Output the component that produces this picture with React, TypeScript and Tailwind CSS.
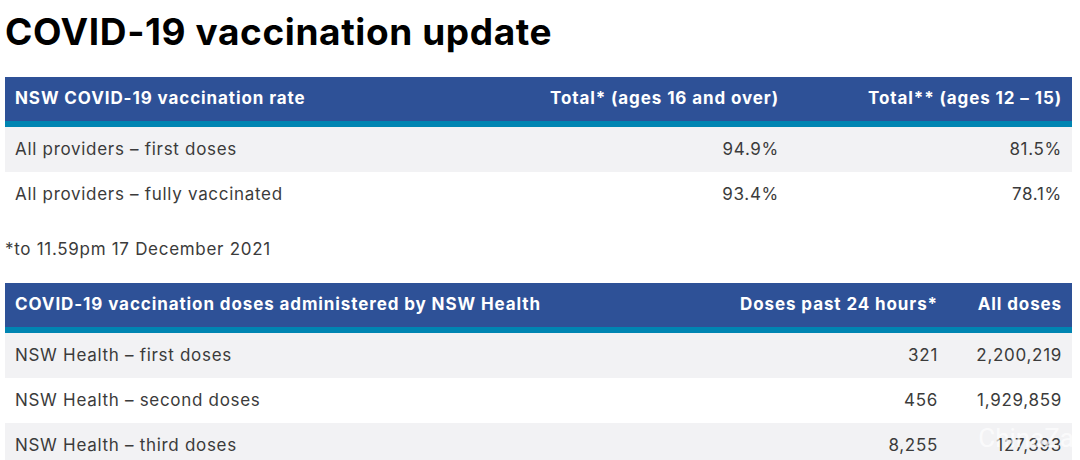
const rateRows = [
  { label: "All providers – first doses", older: "94.9%", teens: "81.5%" },
  { label: "All providers – fully vaccinated", older: "93.4%", teens: "78.1%" },
];

const doseRows = [
  { label: "NSW Health – first doses", day: "321", all: "2,200,219" },
  { label: "NSW Health – second doses", day: "456", all: "1,929,859" },
  { label: "NSW Health – third doses", day: "8,255", all: "127,393" },
];

function HeaderRow({ cols, cells }: { cols: string; cells: string[] }) {
  return (
    <div className="border-b-[6px] border-[#0085b2] bg-[#2e5197]">
      <div className={`grid ${cols} h-[44px] items-center px-[10px] text-[17px] font-bold tracking-[0.9px] text-white`}>
        {cells.map((c, i) => (
          <div key={i} className={i === 0 ? "text-left" : "text-right"}>
            {c}
          </div>
        ))}
      </div>
    </div>
  );
}

function BodyRow({ cols, cells, shaded }: { cols: string; cells: string[]; shaded: boolean }) {
  return (
    <div className={`grid ${cols} h-[45px] items-center px-[10px] text-[17px] tracking-[0.7px] text-[#3b3b3b] ${shaded ? "bg-[#f2f2f4]" : "bg-white"}`}>
      {cells.map((c, i) => (
        <div key={i} className={i === 0 ? "text-left" : "text-right"}>
          {c}
        </div>
      ))}
    </div>
  );
}

export default function App() {
  const rateCols = "grid-cols-[1fr_300px_283px]";
  const doseCols = "grid-cols-[1fr_250px_124px]";

  return (
    <main className="relative h-[460px] w-[1080px] overflow-hidden bg-white pl-[5px] pr-[8px] font-['Inter','Liberation_Sans',sans-serif]">
      <h1 className="pt-[9px] text-[37px] leading-[46px] font-bold tracking-[0.6px] text-black">COVID-19 vaccination update</h1>

      <section className="mt-[22px]">
        <HeaderRow cols={rateCols} cells={["NSW COVID-19 vaccination rate", "Total* (ages 16 and over)", "Total** (ages 12 – 15)"]} />
        {rateRows.map((r, i) => (
          <BodyRow key={r.label} cols={rateCols} cells={[r.label, r.older, r.teens]} shaded={i % 2 === 0} />
        ))}
      </section>

      <p className="mt-[20px] text-[17px] leading-[24px] tracking-[0.7px] text-[#3b3b3b]">*to 11.59pm 17 December 2021</p>

      <section className="mt-[22px]">
        <HeaderRow cols={doseCols} cells={["COVID-19 vaccination doses administered by NSW Health", "Doses past 24 hours*", "All doses"]} />
        {doseRows.map((r, i) => (
          <BodyRow key={r.label} cols={doseCols} cells={[r.label, r.day, r.all]} shaded={i % 2 === 0} />
        ))}
      </section>

      <span className="absolute right-[6px] bottom-[2px] text-[26px] text-white/70 font-['Roboto',sans-serif]">ChinaZa</span>
    </main>
  );
}
